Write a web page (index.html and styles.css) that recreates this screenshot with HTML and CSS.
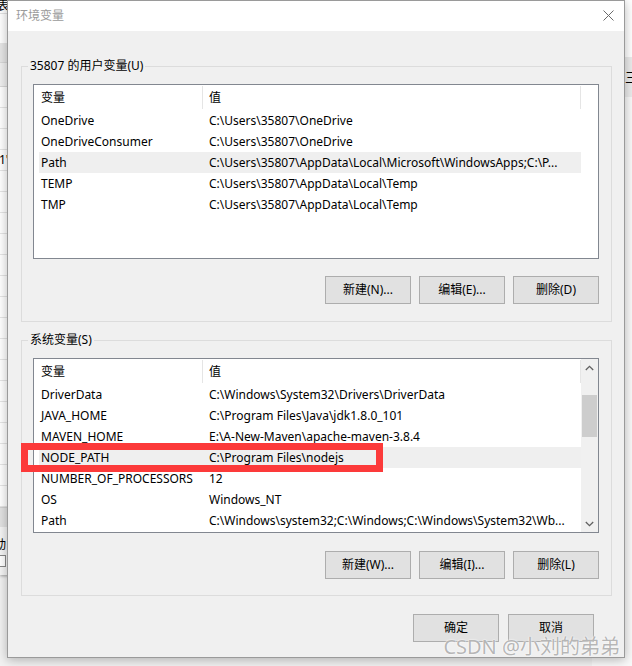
FILE: index.html
```html
<!DOCTYPE html>
<html lang="zh-CN">

<head>
	<meta charset="UTF-8">
	<title>环境变量</title>
	<link rel="stylesheet" href="styles.css">
</head>

<body>
	<div class="desk">
		<!-- windows behind the dialog -->
		<div class="back-left">
			<div class="bl-top">表</div>
			<div class="bl-gap"></div>
			<div class="bl-band"></div>
			<div class="bl-band light"></div>
			<div class="bl-row"></div>
			<div class="bl-row"></div>
			<div class="bl-row"></div>
			<div class="bl-row">1'</div>
			<div class="bl-row"></div>
			<div class="bl-row"></div>
			<div class="bl-row"></div>
			<div class="bl-row"></div>
			<div class="bl-row"></div>
			<div class="bl-row"></div>
			<div class="bl-row"></div>
			<div class="bl-row"></div>
			<div class="bl-row"></div>
			<div class="bl-row"></div>
			<div class="bl-row"></div>
			<div class="bl-row"></div>
			<div class="bl-row"></div>
			<div class="bl-row"></div>
			<div class="bl-row"></div>
			<div class="bl-row"></div>
			<div class="bl-bar"></div>
			<div class="bl-foot">
				<span>动</span>
				<i class="bl-check"></i>
			</div>
		</div>
		<div class="back-right">
			<div class="br-top"></div>
			<div class="br-band">三</div>
		</div>

		<div class="dialog">
			<div class="titlebar">
				<span class="title">环境变量</span>
				<svg class="close" width="11" height="11" viewBox="0 0 11 11">
					<path d="M0.5 0.5L10.5 10.5M10.5 0.5L0.5 10.5" stroke="#6a6a6a" stroke-width="1" fill="none" />
				</svg>
			</div>

			<div class="dlg-body">
				<fieldset class="group">
					<legend>35807 的用户变量(U)</legend>
					<div class="group-body">
						<div class="listview">
							<div class="lv-main">
								<div class="lv-header">
									<div class="hcell c1">变量</div>
									<div class="hcell c2">值</div>
								</div>
								<div class="lv-row"><span class="c1">OneDrive</span><span class="c2">C:\Users\35807\OneDrive</span></div>
								<div class="lv-row"><span class="c1">OneDriveConsumer</span><span class="c2">C:\Users\35807\OneDrive</span></div>
								<div class="lv-row sel"><span class="c1">Path</span><span class="c2">C:\Users\35807\AppData\Local\Microsoft\WindowsApps;C:\P...</span></div>
								<div class="lv-row"><span class="c1">TEMP</span><span class="c2">C:\Users\35807\AppData\Local\Temp</span></div>
								<div class="lv-row"><span class="c1">TMP</span><span class="c2">C:\Users\35807\AppData\Local\Temp</span></div>
							</div>
						</div>
						<div class="btn-row">
							<button class="btn">新建(N)...</button>
							<button class="btn">编辑(E)...</button>
							<button class="btn">删除(D)</button>
						</div>
					</div>
				</fieldset>

				<fieldset class="group group-sys">
					<legend>系统变量(S)</legend>
					<div class="group-body">
						<div class="listview">
							<div class="lv-main">
								<div class="lv-header">
									<div class="hcell c1">变量</div>
									<div class="hcell c2">值</div>
								</div>
								<div class="lv-row"><span class="c1">DriverData</span><span class="c2">C:\Windows\System32\Drivers\DriverData</span></div>
								<div class="lv-row"><span class="c1">JAVA_HOME</span><span class="c2">C:\Program Files\Java\jdk1.8.0_101</span></div>
								<div class="lv-row"><span class="c1">MAVEN_HOME</span><span class="c2">E:\A-New-Maven\apache-maven-3.8.4</span></div>
								<div class="lv-row sel"><span class="c1">NODE_PATH</span><span class="c2">C:\Program Files\nodejs</span></div>
								<div class="lv-row"><span class="c1">NUMBER_OF_PROCESSORS</span><span class="c2">12</span></div>
								<div class="lv-row"><span class="c1">OS</span><span class="c2">Windows_NT</span></div>
								<div class="lv-row"><span class="c1">Path</span><span class="c2">C:\Windows\system32;C:\Windows;C:\Windows\System32\Wb...</span></div>
							</div>
							<div class="vscroll">
								<div class="sb-btn">
									<svg width="9" height="6" viewBox="0 0 9 6"><polyline points="0.8,5 4.5,1.3 8.2,5" fill="none" stroke="#606060" stroke-width="1.3" /></svg>
								</div>
								<div class="sb-track"><div class="sb-thumb"></div></div>
								<div class="sb-btn">
									<svg width="9" height="6" viewBox="0 0 9 6"><polyline points="0.8,1 4.5,4.7 8.2,1" fill="none" stroke="#606060" stroke-width="1.3" /></svg>
								</div>
							</div>
						</div>
						<div class="btn-row">
							<button class="btn">新建(W)...</button>
							<button class="btn">编辑(I)...</button>
							<button class="btn">删除(L)</button>
						</div>
					</div>
				</fieldset>

				<div class="footer">
					<button class="btn">确定</button>
					<button class="btn">取消</button>
				</div>
			</div>
		</div>

		<!-- annotation drawn over the screenshot -->
		<div class="mark"></div>
		<div class="watermark">CSDN @小刘的弟弟</div>
	</div>
</body>

</html>
```

FILE: styles.css
```css
* {
	box-sizing: border-box;
}

body {
	margin: 0;
	background: #f2f2f2;
	font: 12px/16px "Noto Sans", "Noto Sans CJK SC", sans-serif;
	color: #000;
}

.desk {
	position: relative;
	width: 632px;
	height: 666px;
	overflow: hidden;
}

/* background windows */
.back-left {
	position: absolute;
	left: 0;
	top: 0;
	width: 60px;
	height: 574px;
	background: #fff;
	box-shadow: 0 2px 3px rgba(0, 0, 0, .35);
}

.bl-top {
	height: 14px;
	border-bottom: 1px solid #e3e3e3;
	line-height: 12px;
	padding-left: 0;
	margin-left: -3px;
	overflow: hidden;
}

.bl-gap {
	height: 29px;
}

.bl-band {
	height: 20px;
	background: #e6e6e6;
	border-bottom: 1px solid #d8d8d8;
}

.bl-band.light {
	height: 24px;
	background: #f0f0f0;
}

.bl-row {
	height: 21px;
	border-bottom: 1px solid #e5e5e5;
	line-height: 20px;
	margin-left: -1px;
}

.bl-bar {
	height: 20px;
	background: #e2e2e2;
	border-top: 1px solid #d0d0d0;
}

.bl-foot {
	display: flex;
	flex-direction: column;
	gap: 2px;
	padding-top: 10px;
	margin-left: -6px;
	height: 48px;
	background: #f5f5f5;
}

.bl-check {
	display: block;
	width: 12px;
	height: 12px;
	border: 1px solid #888;
	background: #fff;
}

.back-right {
	position: absolute;
	right: 0;
	top: 0;
	width: 40px;
	height: 666px;
	background: #f9f9f9;
}

.br-top {
	height: 57px;
	background: #fff;
}

.br-band {
	height: 40px;
	background: #ebebeb;
	line-height: 40px;
	text-align: right;
	margin-right: -6px;
	font-size: 13px;
}

/* dialog */
.dialog {
	position: absolute;
	left: 7px;
	top: 0;
	width: 618px;
	height: 658px;
	border: 1px solid #9a9a9a;
	background: #f0f0f0;
	box-shadow: 0 2px 10px rgba(0, 0, 0, .28);
	display: flex;
	flex-direction: column;
}

.titlebar {
	height: 30px;
	background: #fff;
	display: flex;
	align-items: center;
	justify-content: space-between;
	padding: 0 10px 0 8px;
}

.title {
	color: #9a9a9a;
}

.close {
	margin-top: -1px;
}

.dlg-body {
	flex: 1;
	display: flex;
	flex-direction: column;
}

.group {
	margin: 27px 12px 0 13px;
	padding: 0;
	border: 1px solid #dcdcdc;
	min-width: 0;
}

.group-sys {
	margin-top: 10px;
}

.group legend {
	margin-left: 6px;
	padding: 0 2px;
	line-height: 16px;
}

.group-body {
	padding: 10px 12px 17px 11px;
}

.group-sys .group-body {
	padding-bottom: 16px;
}

.group-sys .btn-row {
	margin-top: 18px;
}

.listview {
	height: 175px;
	border: 1px solid #828790;
	background: #fff;
	display: flex;
}

.lv-main {
	flex: 1;
	overflow: hidden;
}

.lv-header {
	display: flex;
	height: 25px;
	padding: 1px 0;
}

.hcell {
	border-right: 1px solid #e5e5e5;
	line-height: 23px;
}

.hcell.c1 {
	width: 169px;
	padding-left: 7px;
}

.hcell.c2 {
	width: 378px;
	padding-left: 6px;
}

.lv-row {
	display: flex;
	width: 542px;
	height: 21px;
	margin-left: 5px;
	line-height: 21px;
	white-space: nowrap;
}

.lv-row.sel {
	background: #efefef;
}

.lv-row .c1 {
	width: 164px;
	flex: none;
	padding-left: 2px;
}

.lv-row .c2 {
	flex: 1;
	padding-left: 6px;
	overflow: hidden;
}

.vscroll {
	width: 17px;
	background: #f0f0f0;
	display: flex;
	flex-direction: column;
}

.sb-btn {
	height: 17px;
	display: flex;
	align-items: center;
	justify-content: center;
}

.sb-track {
	flex: 1;
	padding-top: 19px;
}

.sb-thumb {
	height: 42px;
	margin: 0 1px;
	background: #cdcdcd;
}

.btn-row {
	display: flex;
	justify-content: flex-end;
	gap: 8px;
	margin-top: 17px;
}

.btn {
	width: 86px;
	height: 28px;
	padding: 0;
	border: 1px solid #adadad;
	background: #e1e1e1;
	font: inherit;
	color: #000;
}

.footer {
	display: flex;
	justify-content: flex-end;
	gap: 9px;
	padding: 18px 30px 0 0;
}

/* overlays */
.mark {
	position: absolute;
	left: 21px;
	top: 443px;
	width: 362px;
	height: 29px;
	border: 7px solid #fc3a3a;
}

.watermark {
	position: absolute;
	right: 12px;
	bottom: 7px;
	font-size: 20px;
	line-height: 24px;
	color: rgba(150, 150, 150, .7);
	text-shadow: 0 0 2px #fff, 0 0 1px #fff;
}
```
